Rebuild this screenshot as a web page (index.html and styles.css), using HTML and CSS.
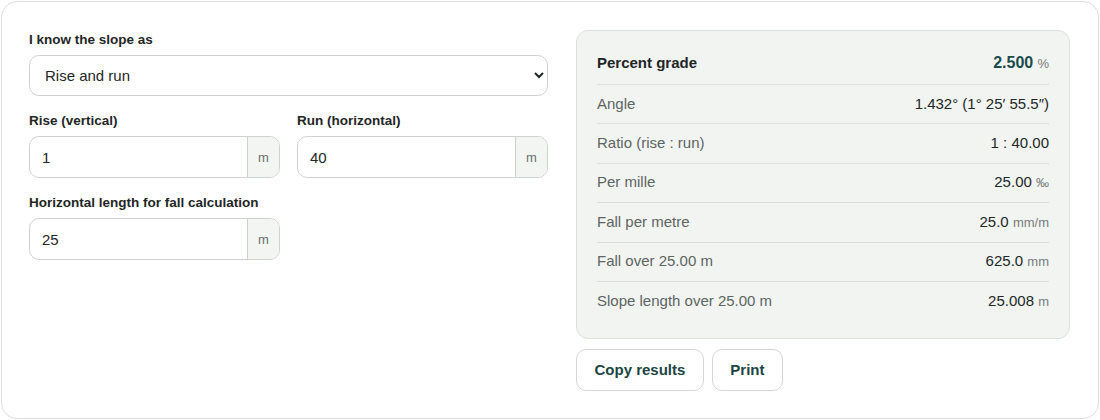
FILE: index.html
```html
<!DOCTYPE html>
<html lang="en">
<head>
<meta charset="utf-8">
<title>Slope calculator</title>
<link rel="stylesheet" href="styles.css">
</head>
<body>
<div class="page">
  <div class="card">
    <div class="inputs">
      <div class="field">
        <label class="label" for="mode">I know the slope as</label>
        <select id="mode" class="select">
          <option>Rise and run</option>
        </select>
      </div>
      <div class="pair">
        <div class="field">
          <label class="label">Rise (vertical)</label>
          <div class="group"><input class="input" value="1"><span class="unit">m</span></div>
        </div>
        <div class="field">
          <label class="label">Run (horizontal)</label>
          <div class="group"><input class="input" value="40"><span class="unit">m</span></div>
        </div>
      </div>
      <div class="pair">
        <div class="field">
          <label class="label">Horizontal length for fall calculation</label>
          <div class="group"><input class="input" value="25"><span class="unit">m</span></div>
        </div>
      </div>
    </div>
    <div class="results">
      <div class="panel">
        <div class="row head"><span class="name">Percent grade</span><span class="val"><b class="big">2.500</b> <span class="u">%</span></span></div>
        <div class="row"><span class="name">Angle</span><span class="val">1.432° (1° 25′ 55.5″)</span></div>
        <div class="row"><span class="name">Ratio (rise : run)</span><span class="val">1 : 40.00</span></div>
        <div class="row"><span class="name">Per mille</span><span class="val">25.00 <span class="u">‰</span></span></div>
        <div class="row"><span class="name">Fall per metre</span><span class="val">25.0 <span class="u">mm/m</span></span></div>
        <div class="row"><span class="name">Fall over 25.00 m</span><span class="val">625.0 <span class="u">mm</span></span></div>
        <div class="row"><span class="name">Slope length over 25.00 m</span><span class="val">25.008 <span class="u">m</span></span></div>
      </div>
      <div class="actions">
        <button class="btn">Copy results</button>
        <button class="btn">Print</button>
      </div>
    </div>
  </div>
</div>
</body>
</html>
```
FILE: styles.css
```css
* { box-sizing: border-box; }
html, body { margin: 0; padding: 0; background: #fff; }
body { font-family: "Liberation Sans", Arial, sans-serif; color: #1f2626; }
.page { padding: 1px; }
.card {
  border: 1px solid #dcdfdc;
  border-radius: 16px;
  padding: 28px 28px 27px 27px;
  display: grid;
  grid-template-columns: minmax(0, 519fr) minmax(0, 494fr);
  column-gap: 28px;
  align-items: start;
}
.inputs { display: flex; flex-direction: column; gap: 16px; padding-top: 1px; }
.field { display: flex; flex-direction: column; gap: 8px; min-width: 0; }
.label { font-size: 13.5px; font-weight: 700; color: #1f2626; line-height: 15px; padding-top: 1px; }
.select {
  height: 41px;
  border: 1px solid #cfd3cf;
  border-radius: 10px;
  background: #fff;
  font-family: inherit;
  font-size: 15px;
  color: #1f2626;
  padding: 0 8px 0 11px;
}
.pair { display: grid; grid-template-columns: 1fr 1fr; column-gap: 17px; }
.group {
  display: flex;
  height: 42px;
  border: 1px solid #cfd3cf;
  border-radius: 10px;
  overflow: hidden;
  background: #fff;
}
.input {
  flex: 1;
  min-width: 0;
  border: 0;
  outline: none;
  padding: 0 12px;
  font-family: inherit;
  font-size: 15px;
  color: #1f2626;
  background: transparent;
}
.unit {
  width: 32px;
  flex: none;
  border-left: 1px solid #cfd3cf;
  background: #f3f5f2;
  color: #6b716e;
  font-size: 13px;
  display: flex;
  align-items: center;
  justify-content: center;
}
.results { display: flex; flex-direction: column; gap: 10px; }
.panel {
  background: #f2f4f2;
  border: 1px solid #dde1dd;
  border-radius: 12px;
  padding: 10px 20px 18px;
}
.row {
  display: flex;
  justify-content: space-between;
  align-items: center;
  height: 39.4px;
  padding-bottom: 2px;
  border-top: 1px solid #dcdfdc;
  font-size: 15px;
}
.row.head { border-top: 0; height: 43px; padding-bottom: 0; }
.name { color: #5d6562; }
.head .name { color: #1f2626; font-weight: 700; }
.val { color: #222827; }
.u { color: #767c79; font-size: 13px; }
.big { color: #1b4b4a; font-size: 16px; font-weight: 700; }
.actions { display: flex; gap: 8px; }
.btn {
  height: 42px;
  padding: 0 17.5px 2px;
  border: 1px solid #d3d7d3;
  border-radius: 10px;
  background: #fff;
  color: #1b4542;
  font-family: inherit;
  font-size: 15px;
  font-weight: 700;
}
```
